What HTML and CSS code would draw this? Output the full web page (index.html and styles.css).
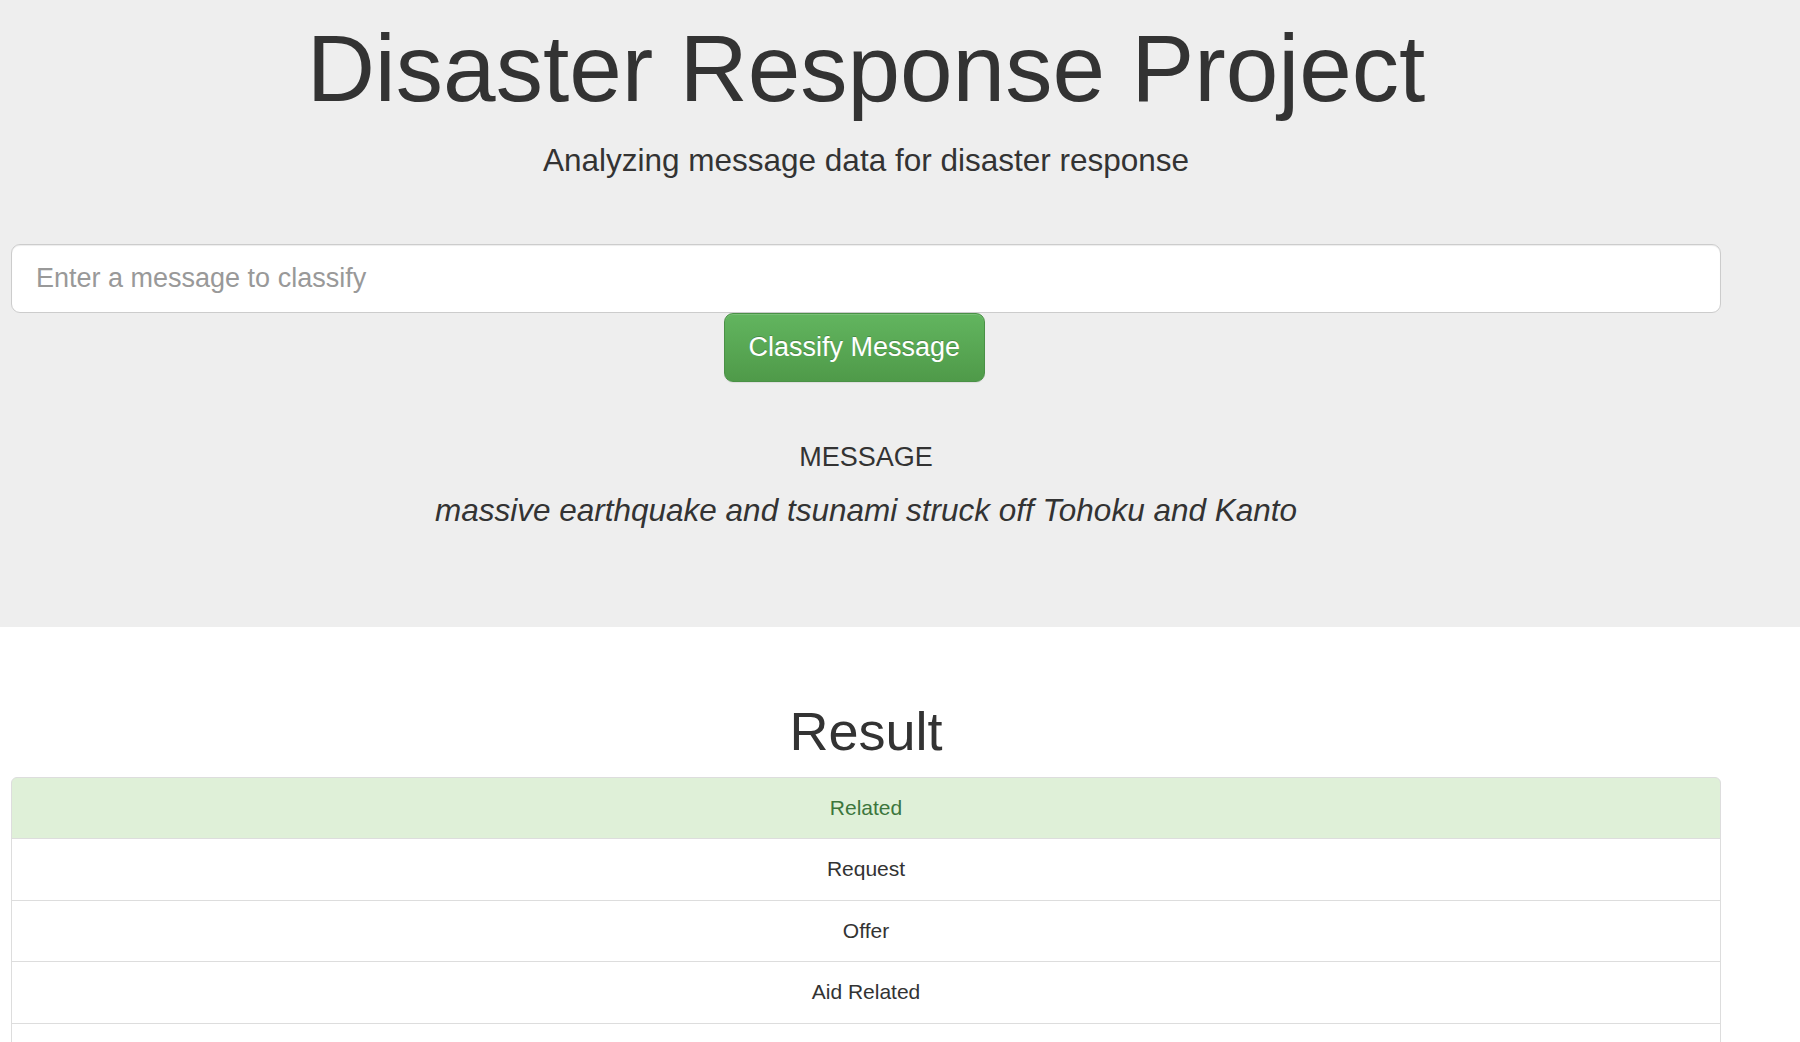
FILE: index.html
```html
<!DOCTYPE html>
<html lang="en">
<head>
<meta charset="utf-8">
<title>Disasters</title>
<link rel="stylesheet" href="styles.css">
</head>
<body>
<div class="jumbotron">
  <div class="container">
    <h1 class="title">Disaster Response Project</h1>
    <p class="lead">Analyzing message data for disaster response</p>
    <hr class="rule">
    <form class="query-form" action="/go" method="get">
      <input type="text" class="query-input" name="query" placeholder="Enter a message to classify">
      <div class="button-row">
        <button type="submit" class="btn-classify">Classify Message</button>
      </div>
    </form>
    <hr class="rule">
    <h4 class="message-label">MESSAGE</h4>
    <p class="lead"><i>massive earthquake and tsunami struck off Tohoku and Kanto</i></p>
  </div>
</div>

<div class="container">
  <h1 class="result-title">Result</h1>
  <ul class="list-group">
    <li class="list-item list-item-success">Related</li>
    <li class="list-item">Request</li>
    <li class="list-item">Offer</li>
    <li class="list-item">Aid Related</li>
    <li class="list-item">Medical Help</li>
    <li class="list-item">Medical Products</li>
    <li class="list-item">Search And Rescue</li>
    <li class="list-item">Security</li>
    <li class="list-item">Military</li>
    <li class="list-item">Child Alone</li>
    <li class="list-item">Water</li>
    <li class="list-item">Food</li>
  </ul>
</div>
</body>
</html>
```

FILE: styles.css
```css
* {
  box-sizing: border-box;
}

html, body {
  margin: 0;
  padding: 0;
}

body {
  background: #fff;
  color: #333;
  font-family: "Liberation Sans", Arial, Helvetica, sans-serif;
  font-size: 21px;
  line-height: 1.42857;
}

.container {
  width: 1710px;
  margin-left: 11px;
}

.container::before,
.container::after {
  content: "";
  display: table;
}

.jumbotron {
  background: #eee;
  padding: 17px 0 72px;
  margin-bottom: 45px;
}

.title {
  margin: 0 0 17px;
  font-size: 94.5px;
  font-weight: 400;
  line-height: 1.1;
  text-align: center;
  color: #333;
}

.lead {
  margin: 0 0 22.5px;
  font-size: 31.5px;
  line-height: 45px;
  text-align: center;
}

.rule {
  margin: 30px 0;
  border: 0;
  border-top: 1.5px solid #eee;
  height: 0;
}

.query-form {
  margin: 0;
}

.query-input {
  display: block;
  width: 100%;
  height: 69px;
  padding: 15px 24px;
  font-family: inherit;
  font-size: 27px;
  line-height: 36px;
  color: #555;
  background: #fff;
  border: 1px solid #ccc;
  border-radius: 9px;
  box-shadow: inset 0 1px 1px rgba(0, 0, 0, 0.075);
  outline: none;
}

.query-input::placeholder {
  color: #999;
}

.button-row {
  margin-left: 41.6667%;
}

.btn-classify {
  display: inline-block;
  height: 69px;
  padding: 15px 24px;
  font-family: inherit;
  font-size: 27px;
  line-height: 36px;
  color: #fff;
  text-shadow: 0 -1px 0 rgba(0, 0, 0, 0.2);
  background: linear-gradient(to bottom, #62b55f 0%, #4f9a49 100%);
  border: 1px solid #4a9146;
  border-radius: 9px;
  box-shadow: inset 0 1px 0 rgba(255, 255, 255, 0.15), 0 1px 1px rgba(0, 0, 0, 0.075);
  cursor: pointer;
}

.message-label {
  margin: 15px 0;
  font-size: 27px;
  font-weight: 400;
  line-height: 1.1;
  text-align: center;
}

.result-title {
  margin: 30px 0 15px;
  font-size: 54px;
  font-weight: 400;
  line-height: 1.1;
  text-align: center;
}

.list-group {
  list-style: none;
  margin: 0 0 30px;
  padding: 0;
}

.list-item {
  display: block;
  padding: 15px 22px;
  margin-bottom: -1px;
  font-size: 21px;
  line-height: 30.5px;
  text-align: center;
  color: #333;
  background: #fff;
  border: 1px solid #ddd;
}

.list-item:first-child {
  border-top-left-radius: 6px;
  border-top-right-radius: 6px;
}

.list-item-success {
  color: #3c763d;
  background: #dff0d8;
}
```
